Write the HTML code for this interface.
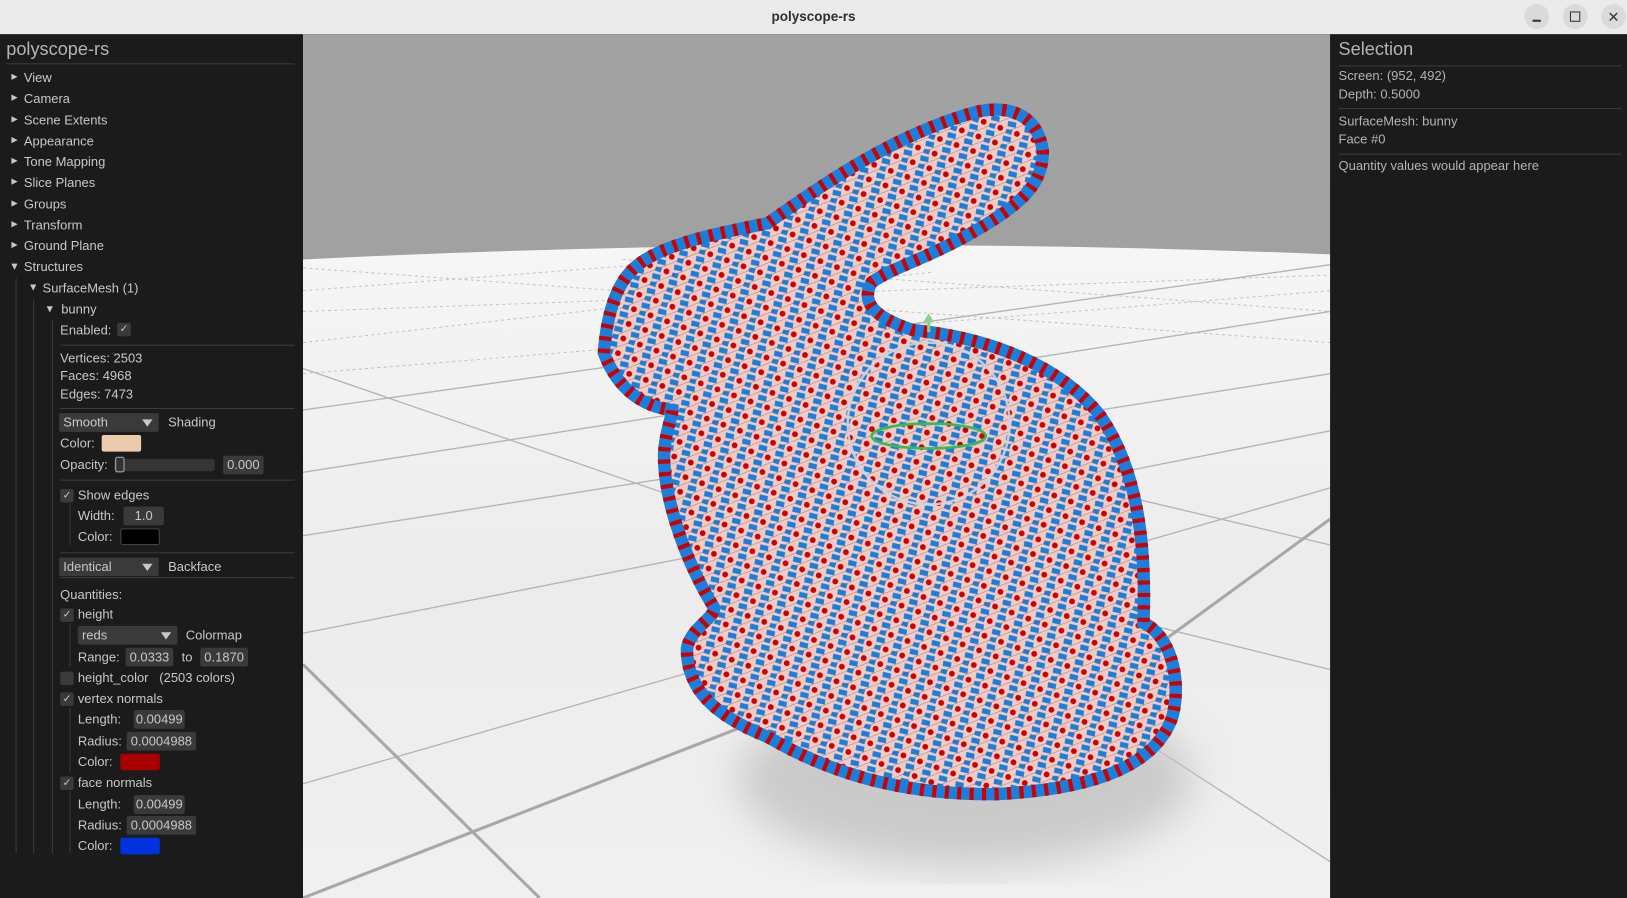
<!DOCTYPE html>
<html><head><meta charset="utf-8"><style>
*{margin:0;padding:0;box-sizing:border-box}
html,body{width:1627px;height:898px;overflow:hidden;background:#1b1b1b}
#w{position:absolute;left:0;top:0;width:1568px;height:865px;transform:scale(1.03763,1.0381);transform-origin:0 0;font-family:"Liberation Sans",sans-serif;font-size:12.5px;color:#c8c8c8}
.a{position:absolute;white-space:nowrap;line-height:16px}
.tb{position:absolute;left:0;top:0;width:1568px;height:33px;background:#ebebeb}
.btn{position:absolute;top:4px;width:24px;height:24px;border-radius:12px;background:#dadada}
.lp{position:absolute;left:0;top:33px;width:291px;height:832px;background:#1b1b1b}
.rp{position:absolute;left:1282px;top:33px;width:286px;height:832px;background:#1b1b1b}
.sep{position:absolute;height:1px;background:#3c3c3c}
.vl{position:absolute;width:1px;background:#3a3a3a}
.tri{position:absolute;width:0;height:0}
.tr{border-top:3.5px solid transparent;border-bottom:3.5px solid transparent;border-left:6px solid #c8c8c8}
.td{border-left:3.5px solid transparent;border-right:3.5px solid transparent;border-top:6px solid #c8c8c8}
.box{position:absolute;height:18px;background:#3a3a3a;border-radius:2px;color:#c8c8c8;line-height:18px;text-align:center}
.cb{position:absolute;width:13px;height:13px;background:#3a3a3a;border-radius:2px;color:#c8c8c8;font-size:10px;line-height:13px;text-align:center}
.combo{position:absolute;height:18px;background:#3a3a3a;border-radius:2px;line-height:18px;padding-left:4px}
.combo:after{content:"";position:absolute;right:6px;top:6px;border-left:5px solid transparent;border-right:5px solid transparent;border-top:7px solid #c8c8c8}
.sw{position:absolute;height:16px;border-radius:2px}
.rt{color:#b4b4b4}
</style></head><body><div id="w">
<div class="tb"><div class="a" style="left:0;width:1568px;text-align:center;top:8px;font-weight:bold;font-size:13px;color:#2e2e2e">polyscope-rs</div>
<div class="btn" style="left:1469px"><div style="position:absolute;left:8px;top:15px;width:8px;height:1.5px;background:#333"></div></div>
<div class="btn" style="left:1506px"><div style="position:absolute;left:7px;top:7px;width:10px;height:10px;border:1.3px solid #333"></div></div>
<div class="btn" style="left:1543px;color:#333;text-align:center;line-height:24px;font-size:14px">✕</div></div>

<div class="lp">
<div class="a" style="left:6px;top:3px;font-size:17.5px;line-height:22px;color:#b4b4b4">polyscope-rs</div>
<div class="sep" style="left:6px;top:28px;width:278px"></div>
</div>
<div id="lc">
<div class="tri tr" style="left:11px;top:71px"></div><div class="a" style="left:23px;top:67px">View</div>
<div class="tri tr" style="left:11px;top:91px"></div><div class="a" style="left:23px;top:87px">Camera</div>
<div class="tri tr" style="left:11px;top:112px"></div><div class="a" style="left:23px;top:108px">Scene Extents</div>
<div class="tri tr" style="left:11px;top:132px"></div><div class="a" style="left:23px;top:128px">Appearance</div>
<div class="tri tr" style="left:11px;top:152px"></div><div class="a" style="left:23px;top:148px">Tone Mapping</div>
<div class="tri tr" style="left:11px;top:172px"></div><div class="a" style="left:23px;top:168px">Slice Planes</div>
<div class="tri tr" style="left:11px;top:193px"></div><div class="a" style="left:23px;top:189px">Groups</div>
<div class="tri tr" style="left:11px;top:213px"></div><div class="a" style="left:23px;top:209px">Transform</div>
<div class="tri tr" style="left:11px;top:233px"></div><div class="a" style="left:23px;top:229px">Ground Plane</div>
<div class="tri td" style="left:11px;top:254px"></div><div class="a" style="left:23px;top:249px">Structures</div>
<div class="vl" style="left:15px;top:268px;height:554px"></div>
<div class="tri td" style="left:29px;top:274px"></div><div class="a" style="left:41px;top:270px">SurfaceMesh (1)</div>
<div class="vl" style="left:32px;top:288px;height:534px"></div>
<div class="tri td" style="left:45px;top:295px"></div><div class="a" style="left:59px;top:290px">bunny</div>
<div class="vl" style="left:50px;top:308px;height:514px"></div>
<div class="a" style="left:58px;top:310px">Enabled:</div><div class="cb" style="left:113px;top:311px">✓</div>
<div class="sep" style="left:58px;top:332px;width:226px"></div>
<div class="a" style="left:58px;top:337px">Vertices: 2503</div>
<div class="a" style="left:58px;top:354px">Faces: 4968</div>
<div class="a" style="left:58px;top:372px">Edges: 7473</div>
<div class="sep" style="left:58px;top:393px;width:226px"></div>
<div class="combo" style="left:57px;top:398px;width:96px">Smooth</div><div class="a" style="left:162px;top:399px">Shading</div>
<div class="a" style="left:58px;top:419px">Color:</div><div class="sw" style="left:98px;top:419px;width:38px;background:#ebcbab"></div>
<div class="a" style="left:58px;top:440px">Opacity:</div>
<div style="position:absolute;left:110px;top:442px;width:97px;height:12px;background:#353535;border-radius:3px"></div>
<div style="position:absolute;left:111px;top:440px;width:9px;height:15px;border:1px solid #aaa;border-radius:2px;background:#333"></div>
<div class="box" style="left:215px;top:439px;width:39px">0.000</div>
<div class="sep" style="left:58px;top:462px;width:226px"></div>
<div class="cb" style="left:58px;top:471px">✓</div><div class="a" style="left:75px;top:469px">Show edges</div>
<div class="vl" style="left:67px;top:485px;height:40px"></div>
<div class="a" style="left:75px;top:489px">Width:</div><div class="box" style="left:119px;top:488px;width:39px">1.0</div>
<div class="a" style="left:75px;top:509px">Color:</div><div class="sw" style="left:116px;top:509px;width:38px;background:#000;border:1px solid #444"></div>
<div class="sep" style="left:58px;top:532px;width:226px"></div>
<div class="combo" style="left:57px;top:537px;width:96px">Identical</div><div class="a" style="left:162px;top:538px">Backface</div>
<div class="sep" style="left:58px;top:556px;width:226px"></div>
<div class="a" style="left:58px;top:565px">Quantities:</div>
<div class="cb" style="left:58px;top:586px">✓</div><div class="a" style="left:75px;top:584px">height</div>
<div class="vl" style="left:67px;top:600px;height:42px"></div>
<div class="combo" style="left:75px;top:603px;width:96px">reds</div><div class="a" style="left:179px;top:604px">Colormap</div>
<div class="a" style="left:75px;top:625px">Range:</div><div class="box" style="left:121px;top:624px;width:46px">0.0333</div>
<div class="a" style="left:175px;top:625px">to</div><div class="box" style="left:193px;top:624px;width:46px">0.1870</div>
<div class="cb" style="left:58px;top:647px"></div><div class="a" style="left:75px;top:645px">height_color &nbsp;&nbsp;(2503 colors)</div>
<div class="cb" style="left:58px;top:667px">✓</div><div class="a" style="left:75px;top:665px">vertex normals</div>
<div class="vl" style="left:67px;top:682px;height:62px"></div>
<div class="a" style="left:75px;top:685px">Length:</div><div class="box" style="left:129px;top:684px;width:49px">0.00499</div>
<div class="a" style="left:75px;top:706px">Radius:</div><div class="box" style="left:122px;top:705px;width:67px">0.0004988</div>
<div class="a" style="left:75px;top:726px">Color:</div><div class="sw" style="left:116px;top:726px;width:38px;background:#a80000"></div>
<div class="cb" style="left:58px;top:748px">✓</div><div class="a" style="left:75px;top:746px">face normals</div>
<div class="vl" style="left:67px;top:762px;height:60px"></div>
<div class="a" style="left:75px;top:767px">Length:</div><div class="box" style="left:129px;top:766px;width:49px">0.00499</div>
<div class="a" style="left:75px;top:787px">Radius:</div><div class="box" style="left:122px;top:786px;width:67px">0.0004988</div>
<div class="a" style="left:75px;top:807px">Color:</div><div class="sw" style="left:116px;top:807px;width:38px;background:#0033dd"></div>
</div>

<svg style="position:absolute;left:292px;top:33px" width="990" height="832" viewBox="292 33 990 832">
<defs>
<linearGradient id="sky" x1="0" y1="0" x2="0" y2="1"><stop offset="0" stop-color="#a2a2a2"/><stop offset="1" stop-color="#9e9e9e"/></linearGradient>
<linearGradient id="gnd" x1="0" y1="0" x2="0" y2="1"><stop offset="0" stop-color="#f6f6f6"/><stop offset="0.5" stop-color="#ececec"/><stop offset="1" stop-color="#f0f0f0"/></linearGradient>
<pattern id="pt" width="17" height="15" patternUnits="userSpaceOnUse" patternTransform="rotate(20)">
<rect width="17" height="15" fill="#f2cbc4"/>
<path d="M1 2 L9 1 L10 6 L2 7Z" fill="#1a7fdc"/>
<circle cx="13" cy="11" r="2.8" fill="#cc0000"/>
<path d="M2 10 L8 9 L8 14 L2 14Z" fill="#1a7fdc"/>
<path d="M0 15 L17 0" stroke="#6a4a4a" stroke-width="0.4"/>
</pattern>
<filter id="bl"><feGaussianBlur stdDeviation="20"/></filter>
</defs>
<rect x="292" y="33" width="990" height="832" fill="url(#sky)"/>
<path d="M292 250 Q787 225 1282 245 L1282 865 L292 865Z" fill="url(#gnd)"/>
<g stroke="#c4c4c4" stroke-width="1" stroke-dasharray="3 3" fill="none">
<path d="M292 300 L1282 265"/><path d="M292 330 L900 262"/><path d="M292 280 L620 255"/>
<path d="M292 258 L1282 330"/><path d="M600 250 L1282 300"/><path d="M292 360 L1282 280"/>
</g>
<g stroke="#b4b4b4" stroke-width="1.3" fill="none">
<path d="M292 355 L800 530"/><path d="M292 395 L1282 255"/>
<path d="M292 455 L1282 300"/><path d="M292 516 L1282 360"/>
<path d="M292 610 L1282 415"/><path d="M292 755 L1282 470"/>
<path d="M1050 470 L1282 525"/><path d="M1100 600 L1282 645"/><path d="M1050 680 L1282 830"/>
</g>
<g stroke="#a8a8a8" stroke-width="3" fill="none">
<path d="M292 640 L520 865"/><path d="M292 865 L870 640"/>
<path d="M1282 500 L1090 640"/>
</g>
<ellipse cx="930" cy="750" rx="220" ry="85" fill="#c4c4c4" filter="url(#bl)" opacity="0.85"/>
<path d="M582 340 C585 300 595 270 615 255 C640 235 690 225 740 215 C790 180 860 130 940 108 C975 100 1000 112 1005 145 C1005 175 990 195 930 228 C890 250 860 258 840 272 C830 290 840 305 880 318 C950 325 1020 350 1060 400 C1095 450 1105 520 1102 600 C1125 610 1140 650 1130 690 C1115 735 1060 760 960 765 C870 766 800 745 740 710 C690 690 662 665 662 625 C665 605 690 595 688 585 C660 540 640 480 640 440 C640 420 648 400 648 395 C620 392 595 375 582 340Z" fill="url(#pt)" stroke="#1a7fdc" stroke-width="12"/>
<path d="M582 340 C585 300 595 270 615 255 C640 235 690 225 740 215 C790 180 860 130 940 108 C975 100 1000 112 1005 145 C1005 175 990 195 930 228 C890 250 860 258 840 272 C830 290 840 305 880 318 C950 325 1020 350 1060 400 C1095 450 1105 520 1102 600 C1125 610 1140 650 1130 690 C1115 735 1060 760 960 765 C870 766 800 745 740 710 C690 690 662 665 662 625 C665 605 690 595 688 585 C660 540 640 480 640 440 C640 420 648 400 648 395 C620 392 595 375 582 340Z" fill="none" stroke="#cc0000" stroke-width="12" stroke-dasharray="4 8"/>
<ellipse cx="895" cy="408" rx="78" ry="78" fill="none" stroke="#d0d4e0" stroke-width="2.5" opacity="0.9"/>
<ellipse cx="895" cy="420" rx="55" ry="12" fill="none" stroke="#33bb55" stroke-width="2.5"/>
<path d="M895 320 L895 305" stroke="#88d090" stroke-width="3"/><path d="M890 310 L895 302 L900 310Z" fill="#88d090"/>
</svg>

<div class="rp">
<div class="a" style="left:8px;top:3px;font-size:17.5px;line-height:22px;color:#b4b4b4">Selection</div>
<div class="sep" style="left:8px;top:30px;width:273px"></div>
<div class="a rt" style="left:8px;top:32px">Screen: (952, 492)</div>
<div class="a rt" style="left:8px;top:50px">Depth: 0.5000</div>
<div class="sep" style="left:8px;top:71px;width:273px"></div>
<div class="a rt" style="left:8px;top:76px">SurfaceMesh: bunny</div>
<div class="a rt" style="left:8px;top:93px">Face #0</div>
<div class="sep" style="left:8px;top:115px;width:273px"></div>
<div class="a rt" style="left:8px;top:119px">Quantity values would appear here</div>
</div>
</div></body></html>
